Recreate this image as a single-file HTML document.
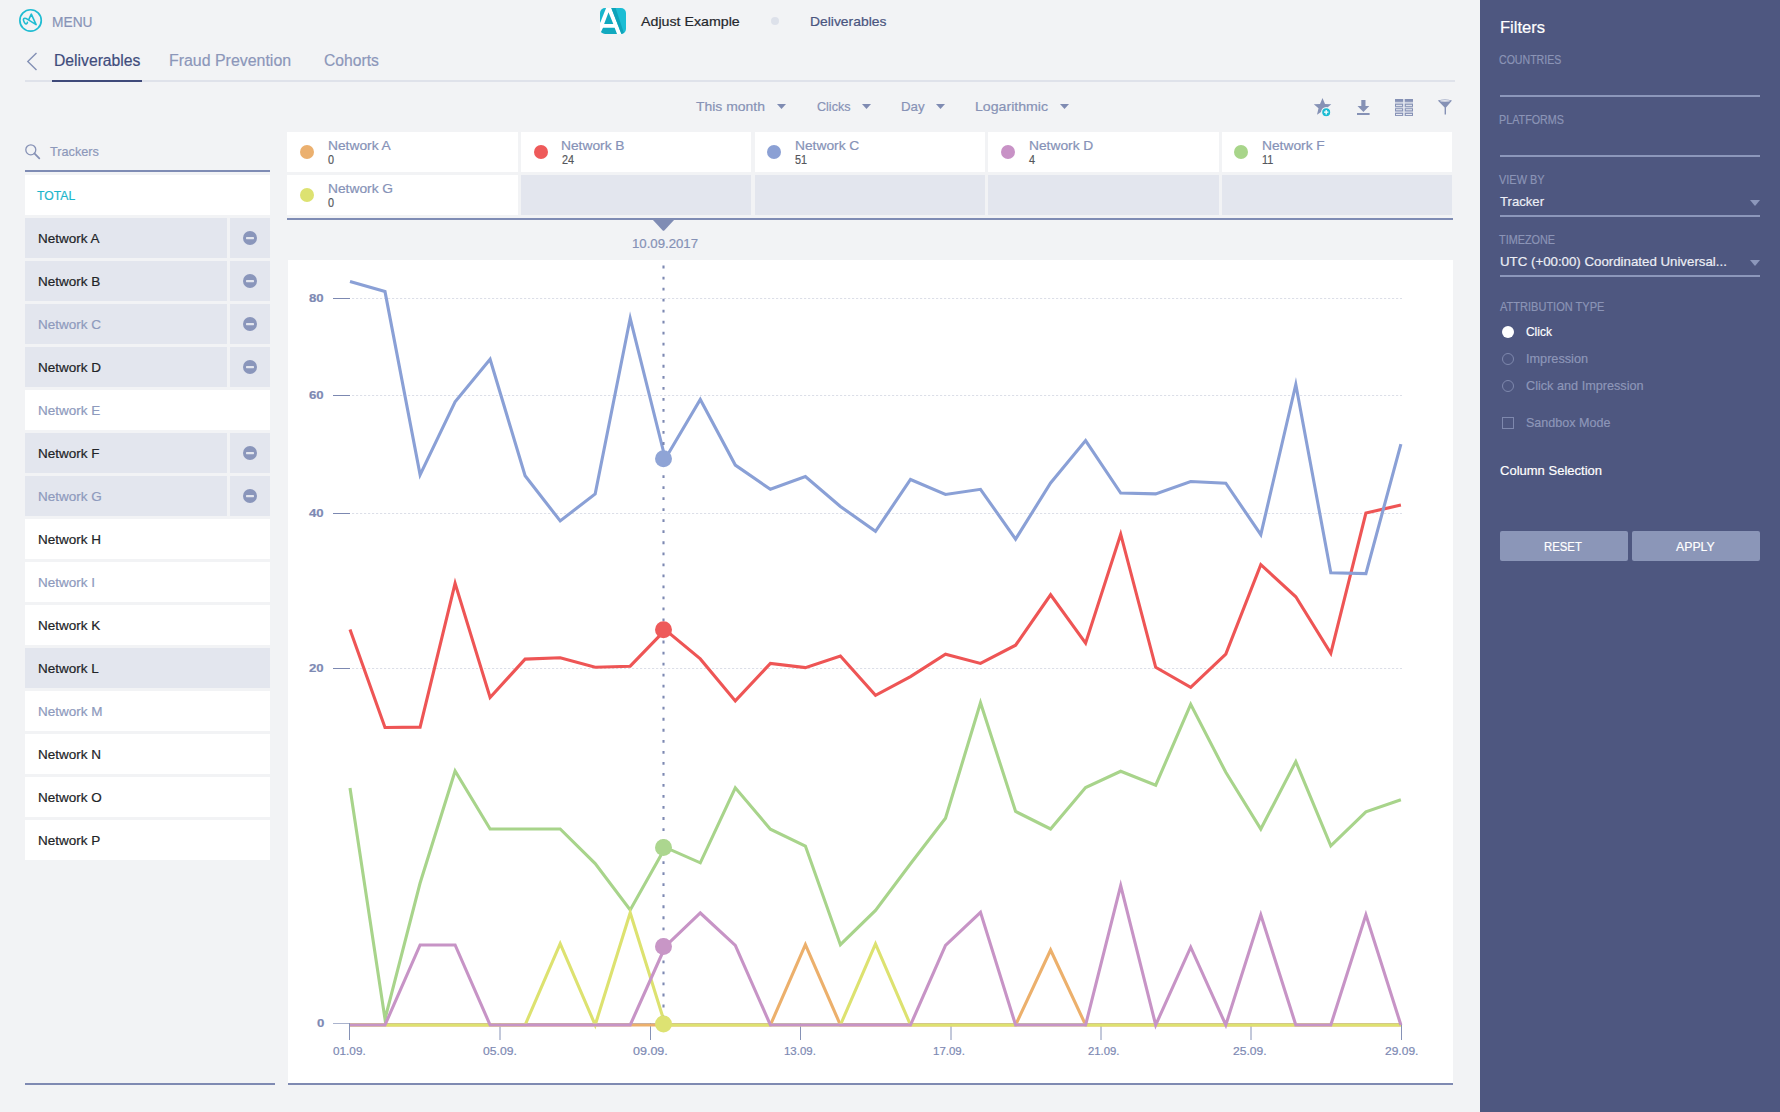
<!DOCTYPE html><html><head><meta charset="utf-8"><style>html,body{margin:0;padding:0;}body{width:1780px;height:1112px;overflow:hidden;position:relative;background:#f2f3f5;font-family:"Liberation Sans",sans-serif;}.abs{position:absolute;}.t{position:absolute;white-space:nowrap;-webkit-text-stroke:0.2px currentColor;}</style></head><body>
<svg class="abs" style="left:18px;top:8px" width="26" height="26" viewBox="0 0 26 26"><circle cx="12.57" cy="12.43" r="10.7" fill="none" stroke="#1fbcd2" stroke-width="1.7"/><path d="M18.1 16.6 L13.3 6.2 L10.6 11.8 M18.1 16.6 L9.6 11.4 C7.6 10.1 5.5 9.8 5.4 11.5 C5.5 13.2 7 15.8 8 16 C8.8 16.1 9.5 14.6 9.4 14.2" fill="none" stroke="#1fbcd2" stroke-width="1.6" stroke-linejoin="round" stroke-linecap="round"/></svg><div class="t" style="left:51.70px;top:14.83px;font-size:14.5px;line-height:14.5px;color:#8893b7;font-weight:400;transform:scaleX(0.9485);transform-origin:0.00px 0;">MENU</div>
<svg class="abs" style="left:26px;top:52px" width="12" height="19" viewBox="0 0 12 19"><path d="M10.5 1 L1.8 9.5 L10.5 18" fill="none" stroke="#8390b5" stroke-width="1.4"/></svg><div class="t" style="left:53.80px;top:52.56px;font-size:16px;line-height:16px;color:#404c7c;font-weight:400;transform:scaleX(0.9813);transform-origin:0.00px 0;">Deliverables</div>
<div class="t" style="left:169.40px;top:52.66px;font-size:16px;line-height:16px;color:#8c97ba;font-weight:400;transform:scaleX(0.9947);transform-origin:0.00px 0;">Fraud Prevention</div>
<div class="t" style="left:323.60px;top:52.66px;font-size:16px;line-height:16px;color:#8c97ba;font-weight:400;transform:scaleX(0.9786);transform-origin:0.00px 0;">Cohorts</div>
<div class="abs" style="left:25px;top:80px;width:1430px;height:2px;background:#dfe2ea"></div><div class="abs" style="left:52px;top:80px;width:90px;height:2px;background:#3f4a7a"></div><svg class="abs" style="left:600px;top:8px" width="26" height="26" viewBox="0 0 26 26"><defs><clipPath id="rc"><rect x="0" y="0" width="26" height="26" rx="5"/></clipPath></defs><g clip-path="url(#rc)"><rect width="26" height="26" fill="#ffffff"/><path d="M0 0 L6.1 0 L0.3 14.6 L0 14.6 Z" fill="#16b6cd"/><path d="M8.5 4.3 L13.3 15.9 L4.1 15.9 Z" fill="#12a9bf"/><path d="M3 19.85 L14.65 19.85 L17.2 26.5 L-1 26.5 L1.2 23.5 Z" fill="#12a9bf"/><path d="M11.3 0 L26 0 L26 26 L21.4 26 Z" fill="#1bbdd4"/><path d="M11.3 0 L15.6 0 L24.2 26 L21.4 26 Z" fill="#0fa3b9"/></g></svg><div class="t" style="left:641.20px;top:14.93px;font-size:13.2px;line-height:13.2px;color:#25272c;font-weight:400;transform:scaleX(1.0774);transform-origin:0.00px 0;">Adjust Example</div>
<div class="abs" style="left:771px;top:17px;width:8px;height:8px;border-radius:50%;background:#dde1ea"></div><div class="t" style="left:809.70px;top:14.70px;font-size:13px;line-height:13px;color:#4a557f;font-weight:400;transform:scaleX(1.0678);transform-origin:0.00px 0;">Deliverables</div>
<div class="t" style="left:696.20px;top:100.47px;font-size:13.5px;line-height:13.5px;color:#8792b6;font-weight:400;transform:scaleX(1.0322);transform-origin:0.00px 0;">This month</div>
<svg class="abs" style="left:777px;top:104px" width="9" height="5" viewBox="0 0 9 5"><path d="M0 0 L9 0 L4.5 5 Z" fill="#7f8bb2"/></svg><div class="t" style="left:816.60px;top:100.47px;font-size:13.5px;line-height:13.5px;color:#8792b6;font-weight:400;transform:scaleX(0.9306);transform-origin:0.00px 0;">Clicks</div>
<svg class="abs" style="left:862px;top:104px" width="9" height="5" viewBox="0 0 9 5"><path d="M0 0 L9 0 L4.5 5 Z" fill="#7f8bb2"/></svg><div class="t" style="left:901.10px;top:100.47px;font-size:13.5px;line-height:13.5px;color:#8792b6;font-weight:400;transform:scaleX(0.9833);transform-origin:0.00px 0;">Day</div>
<svg class="abs" style="left:936px;top:104px" width="9" height="5" viewBox="0 0 9 5"><path d="M0 0 L9 0 L4.5 5 Z" fill="#7f8bb2"/></svg><div class="t" style="left:975.00px;top:100.47px;font-size:13.5px;line-height:13.5px;color:#8792b6;font-weight:400;transform:scaleX(1.0473);transform-origin:0.00px 0;">Logarithmic</div>
<svg class="abs" style="left:1060px;top:104px" width="9" height="5" viewBox="0 0 9 5"><path d="M0 0 L9 0 L4.5 5 Z" fill="#7f8bb2"/></svg><svg class="abs" style="left:1310px;top:95px" width="150" height="24" viewBox="1310 95 150 24"><path d="M1322.5 98 L1325 104 L1331.3 104.3 L1326.5 108.2 L1328 114.5 L1322.5 111 L1317 114.8 L1318.5 108.2 L1313.8 104.3 L1320 104 Z" fill="#8591b5"/><circle cx="1326.2" cy="112.2" r="4.6" fill="#1bbcd3" stroke="#f2f3f6" stroke-width="1.2"/><path d="M1326.2 110 V114.4 M1324 112.2 H1328.4" stroke="#fff" stroke-width="1.3"/><path d="M1361.3 100 H1365.5 V106 H1369.3 L1363.4 112 L1357.5 106 H1361.3 Z" fill="#8591b5"/><rect x="1357" y="113" width="12.6" height="2" fill="#8591b5"/><rect x="1395" y="99" width="18" height="17" fill="#ccd1e0"/><rect x="1403.1" y="99" width="1.7" height="17" fill="#e4e7ef"/><rect x="1395" y="99" width="8.1" height="2.8" fill="#8591b5"/><rect x="1404.8" y="99" width="8.2" height="2.8" fill="#8591b5"/><rect x="1395.5" y="104.3" width="7.1" height="2" fill="#f4f5f8" stroke="#8591b5" stroke-width="1"/><rect x="1405.3" y="104.3" width="7.2" height="2" fill="#f4f5f8" stroke="#8591b5" stroke-width="1"/><rect x="1395.5" y="108.8" width="7.1" height="2" fill="#f4f5f8" stroke="#8591b5" stroke-width="1"/><rect x="1405.3" y="108.8" width="7.2" height="2" fill="#f4f5f8" stroke="#8591b5" stroke-width="1"/><rect x="1395.5" y="113.4" width="7.1" height="2" fill="#f4f5f8" stroke="#8591b5" stroke-width="1"/><rect x="1405.3" y="113.4" width="7.2" height="2" fill="#f4f5f8" stroke="#8591b5" stroke-width="1"/><path d="M1437.8 100.5 Q1445 98.5 1452 100.5 L1446 107.5 L1446 114.5 L1444.6 114.5 L1444.6 107.5 Z" fill="#8591b5"/><ellipse cx="1445" cy="100.8" rx="5" ry="0.9" fill="#e6e8ef"/></svg><svg class="abs" style="left:24px;top:143px" width="18" height="18" viewBox="0 0 18 18"><circle cx="6.8" cy="6.8" r="5" fill="none" stroke="#8792b6" stroke-width="1.3"/><path d="M10.4 10.4 L15.3 15.3" stroke="#8792b6" stroke-width="1.8" stroke-linecap="round"/></svg><div class="t" style="left:50.20px;top:144.77px;font-size:13.5px;line-height:13.5px;color:#8d98ba;font-weight:400;transform:scaleX(0.9404);transform-origin:0.00px 0;">Trackers</div>
<div class="abs" style="left:25px;top:170px;width:245px;height:2px;background:#7f8cb4"></div><div class="abs" style="left:25px;top:175px;width:245px;height:40px;background:#fff"></div><div class="t" style="left:37.10px;top:188.74px;font-size:13.3px;line-height:13.3px;color:#1cb6cb;font-weight:400;transform:scaleX(0.9172);transform-origin:0.00px 0;">TOTAL</div>
<div class="abs" style="left:25px;top:218px;width:202px;height:40px;background:#e3e6ee"></div><div class="abs" style="left:230px;top:218px;width:40px;height:40px;background:#e3e6ee"></div><svg class="abs" style="left:243px;top:231px" width="14" height="14" viewBox="0 0 14 14"><circle cx="7" cy="7" r="7" fill="#8a96bb"/><rect x="3" y="5.9" width="8" height="2.3" rx="0.6" fill="#e3e6ee"/></svg><div class="t" style="left:37.60px;top:232.10px;font-size:13px;line-height:13px;color:#222428;font-weight:400;transform:scaleX(1.0380);transform-origin:0.00px 0;">Network A</div>
<div class="abs" style="left:25px;top:261px;width:202px;height:40px;background:#e3e6ee"></div><div class="abs" style="left:230px;top:261px;width:40px;height:40px;background:#e3e6ee"></div><svg class="abs" style="left:243px;top:274px" width="14" height="14" viewBox="0 0 14 14"><circle cx="7" cy="7" r="7" fill="#8a96bb"/><rect x="3" y="5.9" width="8" height="2.3" rx="0.6" fill="#e3e6ee"/></svg><div class="t" style="left:37.60px;top:275.10px;font-size:13px;line-height:13px;color:#222428;font-weight:400;transform:scaleX(1.0380);transform-origin:0.00px 0;">Network B</div>
<div class="abs" style="left:25px;top:304px;width:202px;height:40px;background:#e3e6ee"></div><div class="abs" style="left:230px;top:304px;width:40px;height:40px;background:#e3e6ee"></div><svg class="abs" style="left:243px;top:317px" width="14" height="14" viewBox="0 0 14 14"><circle cx="7" cy="7" r="7" fill="#8a96bb"/><rect x="3" y="5.9" width="8" height="2.3" rx="0.6" fill="#e3e6ee"/></svg><div class="t" style="left:37.60px;top:318.10px;font-size:13px;line-height:13px;color:#8e9abd;font-weight:400;transform:scaleX(1.0380);transform-origin:0.00px 0;">Network C</div>
<div class="abs" style="left:25px;top:347px;width:202px;height:40px;background:#e3e6ee"></div><div class="abs" style="left:230px;top:347px;width:40px;height:40px;background:#e3e6ee"></div><svg class="abs" style="left:243px;top:360px" width="14" height="14" viewBox="0 0 14 14"><circle cx="7" cy="7" r="7" fill="#8a96bb"/><rect x="3" y="5.9" width="8" height="2.3" rx="0.6" fill="#e3e6ee"/></svg><div class="t" style="left:37.60px;top:361.10px;font-size:13px;line-height:13px;color:#222428;font-weight:400;transform:scaleX(1.0380);transform-origin:0.00px 0;">Network D</div>
<div class="abs" style="left:25px;top:390px;width:245px;height:40px;background:#fff"></div><div class="t" style="left:37.60px;top:404.10px;font-size:13px;line-height:13px;color:#8e9abd;font-weight:400;transform:scaleX(1.0380);transform-origin:0.00px 0;">Network E</div>
<div class="abs" style="left:25px;top:433px;width:202px;height:40px;background:#e3e6ee"></div><div class="abs" style="left:230px;top:433px;width:40px;height:40px;background:#e3e6ee"></div><svg class="abs" style="left:243px;top:446px" width="14" height="14" viewBox="0 0 14 14"><circle cx="7" cy="7" r="7" fill="#8a96bb"/><rect x="3" y="5.9" width="8" height="2.3" rx="0.6" fill="#e3e6ee"/></svg><div class="t" style="left:37.60px;top:447.10px;font-size:13px;line-height:13px;color:#222428;font-weight:400;transform:scaleX(1.0380);transform-origin:0.00px 0;">Network F</div>
<div class="abs" style="left:25px;top:476px;width:202px;height:40px;background:#e3e6ee"></div><div class="abs" style="left:230px;top:476px;width:40px;height:40px;background:#e3e6ee"></div><svg class="abs" style="left:243px;top:489px" width="14" height="14" viewBox="0 0 14 14"><circle cx="7" cy="7" r="7" fill="#8a96bb"/><rect x="3" y="5.9" width="8" height="2.3" rx="0.6" fill="#e3e6ee"/></svg><div class="t" style="left:37.60px;top:490.10px;font-size:13px;line-height:13px;color:#8e9abd;font-weight:400;transform:scaleX(1.0380);transform-origin:0.00px 0;">Network G</div>
<div class="abs" style="left:25px;top:519px;width:245px;height:40px;background:#fff"></div><div class="t" style="left:37.60px;top:533.10px;font-size:13px;line-height:13px;color:#222428;font-weight:400;transform:scaleX(1.0380);transform-origin:0.00px 0;">Network H</div>
<div class="abs" style="left:25px;top:562px;width:245px;height:40px;background:#fff"></div><div class="t" style="left:37.60px;top:576.10px;font-size:13px;line-height:13px;color:#8e9abd;font-weight:400;transform:scaleX(1.0380);transform-origin:0.00px 0;">Network I</div>
<div class="abs" style="left:25px;top:605px;width:245px;height:40px;background:#fff"></div><div class="t" style="left:37.60px;top:619.10px;font-size:13px;line-height:13px;color:#222428;font-weight:400;transform:scaleX(1.0380);transform-origin:0.00px 0;">Network K</div>
<div class="abs" style="left:25px;top:648px;width:245px;height:40px;background:#e3e6ee"></div><div class="t" style="left:37.60px;top:662.10px;font-size:13px;line-height:13px;color:#222428;font-weight:400;transform:scaleX(1.0380);transform-origin:0.00px 0;">Network L</div>
<div class="abs" style="left:25px;top:691px;width:245px;height:40px;background:#fff"></div><div class="t" style="left:37.60px;top:705.10px;font-size:13px;line-height:13px;color:#8e9abd;font-weight:400;transform:scaleX(1.0380);transform-origin:0.00px 0;">Network M</div>
<div class="abs" style="left:25px;top:734px;width:245px;height:40px;background:#fff"></div><div class="t" style="left:37.60px;top:748.10px;font-size:13px;line-height:13px;color:#222428;font-weight:400;transform:scaleX(1.0380);transform-origin:0.00px 0;">Network N</div>
<div class="abs" style="left:25px;top:777px;width:245px;height:40px;background:#fff"></div><div class="t" style="left:37.60px;top:791.10px;font-size:13px;line-height:13px;color:#222428;font-weight:400;transform:scaleX(1.0380);transform-origin:0.00px 0;">Network O</div>
<div class="abs" style="left:25px;top:820px;width:245px;height:40px;background:#fff"></div><div class="t" style="left:37.60px;top:834.10px;font-size:13px;line-height:13px;color:#222428;font-weight:400;transform:scaleX(1.0380);transform-origin:0.00px 0;">Network P</div>
<div class="abs" style="left:25px;top:1083px;width:250px;height:2px;background:#7f8ab2"></div><div class="abs" style="left:287.3px;top:132px;width:230.6px;height:40px;background:#fff"></div><div class="abs" style="left:300.0px;top:145px;width:14px;height:14px;border-radius:50%;background:#ebb06f"></div><div class="t" style="left:327.80px;top:138.90px;font-size:13px;line-height:13px;color:#8692b7;font-weight:400;transform:scaleX(1.0599);transform-origin:0.00px 0;">Network A</div>
<div class="t" style="left:328.00px;top:153.89px;font-size:12.3px;line-height:12.3px;color:#55575c;font-weight:400;transform:scaleX(0.8800);transform-origin:0.00px 0;">0</div>
<div class="abs" style="left:520.9px;top:132px;width:230.6px;height:40px;background:#fff"></div><div class="abs" style="left:533.6px;top:145px;width:14px;height:14px;border-radius:50%;background:#ee5a5a"></div><div class="t" style="left:561.40px;top:138.90px;font-size:13px;line-height:13px;color:#8692b7;font-weight:400;transform:scaleX(1.0599);transform-origin:0.00px 0;">Network B</div>
<div class="t" style="left:561.60px;top:153.89px;font-size:12.3px;line-height:12.3px;color:#55575c;font-weight:400;transform:scaleX(0.8800);transform-origin:0.00px 0;">24</div>
<div class="abs" style="left:754.5px;top:132px;width:230.6px;height:40px;background:#fff"></div><div class="abs" style="left:767.2px;top:145px;width:14px;height:14px;border-radius:50%;background:#8ba0d4"></div><div class="t" style="left:795.00px;top:138.90px;font-size:13px;line-height:13px;color:#8692b7;font-weight:400;transform:scaleX(1.0599);transform-origin:0.00px 0;">Network C</div>
<div class="t" style="left:795.20px;top:153.89px;font-size:12.3px;line-height:12.3px;color:#55575c;font-weight:400;transform:scaleX(0.8800);transform-origin:0.00px 0;">51</div>
<div class="abs" style="left:988.1px;top:132px;width:230.6px;height:40px;background:#fff"></div><div class="abs" style="left:1000.8000000000001px;top:145px;width:14px;height:14px;border-radius:50%;background:#c892c6"></div><div class="t" style="left:1028.60px;top:138.90px;font-size:13px;line-height:13px;color:#8692b7;font-weight:400;transform:scaleX(1.0599);transform-origin:0.00px 0;">Network D</div>
<div class="t" style="left:1028.80px;top:153.89px;font-size:12.3px;line-height:12.3px;color:#55575c;font-weight:400;transform:scaleX(0.8800);transform-origin:0.00px 0;">4</div>
<div class="abs" style="left:1221.7px;top:132px;width:230.6px;height:40px;background:#fff"></div><div class="abs" style="left:1234.4px;top:145px;width:14px;height:14px;border-radius:50%;background:#a8d58a"></div><div class="t" style="left:1262.20px;top:138.90px;font-size:13px;line-height:13px;color:#8692b7;font-weight:400;transform:scaleX(1.0599);transform-origin:0.00px 0;">Network F</div>
<div class="t" style="left:1262.40px;top:153.89px;font-size:12.3px;line-height:12.3px;color:#55575c;font-weight:400;transform:scaleX(0.8800);transform-origin:0.00px 0;">11</div>
<div class="abs" style="left:287.3px;top:175px;width:230.6px;height:40px;background:#fff"></div><div class="abs" style="left:300.0px;top:188px;width:14px;height:14px;border-radius:50%;background:#dde271"></div><div class="t" style="left:327.80px;top:181.90px;font-size:13px;line-height:13px;color:#8692b7;font-weight:400;transform:scaleX(1.0599);transform-origin:0.00px 0;">Network G</div>
<div class="t" style="left:328.00px;top:196.89px;font-size:12.3px;line-height:12.3px;color:#55575c;font-weight:400;transform:scaleX(0.8800);transform-origin:0.00px 0;">0</div>
<div class="abs" style="left:520.9px;top:175px;width:230.6px;height:40px;background:#e3e6ee"></div><div class="abs" style="left:754.5px;top:175px;width:230.6px;height:40px;background:#e3e6ee"></div><div class="abs" style="left:988.1px;top:175px;width:230.6px;height:40px;background:#e3e6ee"></div><div class="abs" style="left:1221.7px;top:175px;width:230.6px;height:40px;background:#e3e6ee"></div><div class="abs" style="left:287px;top:218px;width:1166px;height:2px;background:#7f8cb4"></div><svg class="abs" style="left:652px;top:219px" width="23" height="13" viewBox="0 0 23 13"><path d="M0 0 L23 0 L12.5 11.2 Q11.5 12.2 10.5 11.2 Z" fill="#7f8cb4"/></svg><div class="t" style="left:632.00px;top:237.07px;font-size:13.5px;line-height:13.5px;color:#8591b6;font-weight:400;transform:scaleX(0.9771);transform-origin:0.00px 0;">10.09.2017</div>
<div class="abs" style="left:288px;top:260px;width:1165px;height:823px;background:#fff"></div><div class="abs" style="left:288px;top:1083px;width:1165px;height:2px;background:#7f8ab2"></div><svg class="abs" style="left:0;top:0" width="1480" height="1112" viewBox="0 0 1480 1112"><line x1="352" y1="298.5" x2="1402" y2="298.5" stroke="#dcdfe8" stroke-width="1" stroke-dasharray="2.2 1.8"/><line x1="333" y1="298.5" x2="350" y2="298.5" stroke="#7c88b1" stroke-width="1"/><line x1="352" y1="395.5" x2="1402" y2="395.5" stroke="#dcdfe8" stroke-width="1" stroke-dasharray="2.2 1.8"/><line x1="333" y1="395.5" x2="350" y2="395.5" stroke="#7c88b1" stroke-width="1"/><line x1="352" y1="513.5" x2="1402" y2="513.5" stroke="#dcdfe8" stroke-width="1" stroke-dasharray="2.2 1.8"/><line x1="333" y1="513.5" x2="350" y2="513.5" stroke="#7c88b1" stroke-width="1"/><line x1="352" y1="668.5" x2="1402" y2="668.5" stroke="#dcdfe8" stroke-width="1" stroke-dasharray="2.2 1.8"/><line x1="333" y1="668.5" x2="350" y2="668.5" stroke="#7c88b1" stroke-width="1"/><line x1="333" y1="1023.5" x2="1402" y2="1023.5" stroke="#aab3cd" stroke-width="1"/><line x1="349.5" y1="1023" x2="349.5" y2="1040" stroke="#8692b6" stroke-width="1"/><line x1="500" y1="1023" x2="500" y2="1040" stroke="#8692b6" stroke-width="1"/><line x1="650.5" y1="1023" x2="650.5" y2="1040" stroke="#8692b6" stroke-width="1"/><line x1="800.5" y1="1023" x2="800.5" y2="1040" stroke="#8692b6" stroke-width="1"/><line x1="951" y1="1023" x2="951" y2="1040" stroke="#8692b6" stroke-width="1"/><line x1="1101" y1="1023" x2="1101" y2="1040" stroke="#8692b6" stroke-width="1"/><line x1="1251" y1="1023" x2="1251" y2="1040" stroke="#8692b6" stroke-width="1"/><line x1="1401.5" y1="1023" x2="1401.5" y2="1040" stroke="#8692b6" stroke-width="1"/><polyline points="350.0,788.0 385.0,1019.0 420.1,883.0 455.1,771.0 490.1,829.0 525.1,829.0 560.2,829.0 595.2,863.6 630.2,910.0 665.3,847.4 700.3,862.8 735.3,787.8 770.4,829.2 805.4,846.0 840.4,944.7 875.5,910.4 910.5,863.8 945.5,818.2 980.5,702.7 1015.6,811.5 1050.6,829.0 1085.6,787.5 1120.7,771.3 1155.7,785.2 1190.7,704.3 1225.8,772.3 1260.8,829.0 1295.8,761.6 1330.8,845.8 1365.9,811.8 1400.9,799.8" fill="none" stroke="#a8d48b" stroke-width="3.1" stroke-linejoin="miter" stroke-miterlimit="10"/><polyline points="350.0,1025.0 385.0,1025.0 420.1,1025.0 455.1,1025.0 490.1,1025.0 525.1,1025.0 560.2,1025.0 595.2,1025.0 630.2,1025.0 665.3,1025.0 700.3,1025.0 735.3,1025.0 770.4,1025.0 805.4,944.7 840.4,1025.0 875.5,1025.0 910.5,1025.0 945.5,1025.0 980.5,1025.0 1015.6,1025.0 1050.6,950.0 1085.6,1025.0 1120.7,1025.0 1155.7,1025.0 1190.7,1025.0 1225.8,1025.0 1260.8,1025.0 1295.8,1025.0 1330.8,1025.0 1365.9,1025.0 1400.9,1025.0" fill="none" stroke="#ecb06c" stroke-width="3.1" stroke-linejoin="miter" stroke-miterlimit="10"/><polyline points="350.0,1025.0 385.0,1025.0 420.1,1025.0 455.1,1025.0 490.1,1025.0 525.1,1025.0 560.2,943.7 595.2,1025.0 630.2,912.7 665.3,1025.0 700.3,1025.0 735.3,1025.0 770.4,1025.0 805.4,1025.0 840.4,1025.0 875.5,943.8 910.5,1025.0 945.5,1025.0 980.5,1025.0 1015.6,1025.0 1050.6,1025.0 1085.6,1025.0 1120.7,1025.0 1155.7,1025.0 1190.7,1025.0 1225.8,1025.0 1260.8,1025.0 1295.8,1025.0 1330.8,1025.0 1365.9,1025.0 1400.9,1025.0" fill="none" stroke="#dde270" stroke-width="3.1" stroke-linejoin="miter" stroke-miterlimit="10"/><polyline points="350.0,1025.0 385.0,1025.0 420.1,945.0 455.1,945.0 490.1,1025.0 525.1,1025.0 560.2,1025.0 595.2,1025.0 630.2,1025.0 665.3,946.5 700.3,913.0 735.3,945.4 770.4,1025.0 805.4,1025.0 840.4,1025.0 875.5,1025.0 910.5,1025.0 945.5,945.4 980.5,912.4 1015.6,1025.0 1050.6,1025.0 1085.6,1025.0 1120.7,885.6 1155.7,1025.0 1190.7,947.2 1225.8,1025.0 1260.8,914.8 1295.8,1025.0 1330.8,1025.0 1365.9,914.8 1400.9,1025.0" fill="none" stroke="#c794c6" stroke-width="3.1" stroke-linejoin="miter" stroke-miterlimit="10"/><polyline points="350.0,629.4 385.0,727.5 420.1,727.1 455.1,583.3 490.1,697.5 525.1,659.1 560.2,657.7 595.2,667.2 630.2,666.2 665.3,629.8 700.3,658.9 735.3,700.9 770.4,663.4 805.4,667.6 840.4,656.0 875.5,695.3 910.5,676.6 945.5,654.2 980.5,663.4 1015.6,645.2 1050.6,594.8 1085.6,643.2 1120.7,534.2 1155.7,667.3 1190.7,687.4 1225.8,654.0 1260.8,564.6 1295.8,596.8 1330.8,653.3 1365.9,513.0 1400.9,505.1" fill="none" stroke="#ee5555" stroke-width="3.1" stroke-linejoin="miter" stroke-miterlimit="10"/><polyline points="350.0,281.5 385.0,291.6 420.1,474.9 455.1,401.8 490.1,359.2 525.1,475.8 560.2,520.9 595.2,493.9 630.2,318.3 665.3,458.8 700.3,399.5 735.3,465.1 770.4,489.3 805.4,476.6 840.4,506.5 875.5,531.3 910.5,479.5 945.5,494.5 980.5,489.3 1015.6,539.1 1050.6,483.0 1085.6,440.6 1120.7,493.0 1155.7,493.9 1190.7,481.5 1225.8,483.2 1260.8,534.7 1295.8,384.5 1330.8,572.7 1365.9,573.6 1400.9,444.1" fill="none" stroke="#8aa0d6" stroke-width="3.1" stroke-linejoin="miter" stroke-miterlimit="10"/><line x1="663.5" y1="265.6" x2="663.5" y2="1022" stroke="#7d89b2" stroke-width="2.1" stroke-dasharray="2.8 8.23"/><circle cx="663.5" cy="458.8" r="8.5" fill="#8fa4d6"/><circle cx="663.5" cy="629.8" r="8.5" fill="#ee5a5a"/><circle cx="663.5" cy="847.4" r="8.5" fill="#acd68f"/><circle cx="663.5" cy="946.5" r="8.5" fill="#c896c6"/><circle cx="663.5" cy="1024" r="8.5" fill="#dde272"/></svg><div class="t" style="left:308.90px;top:293.07px;font-size:11.5px;line-height:11.5px;color:#7d89b3;font-weight:700;transform:scaleX(1.1484);transform-origin:0.00px 0;">80</div>
<div class="t" style="left:308.90px;top:390.07px;font-size:11.5px;line-height:11.5px;color:#7d89b3;font-weight:700;transform:scaleX(1.1484);transform-origin:0.00px 0;">60</div>
<div class="t" style="left:308.90px;top:508.07px;font-size:11.5px;line-height:11.5px;color:#7d89b3;font-weight:700;transform:scaleX(1.1484);transform-origin:0.00px 0;">40</div>
<div class="t" style="left:308.90px;top:663.07px;font-size:11.5px;line-height:11.5px;color:#7d89b3;font-weight:700;transform:scaleX(1.1484);transform-origin:0.00px 0;">20</div>
<div class="t" style="left:316.50px;top:1017.87px;font-size:11.5px;line-height:11.5px;color:#7d89b3;font-weight:700;transform:scaleX(1.1500);transform-origin:0.00px 0;">0</div>
<div class="t" style="left:333.00px;top:1046.23px;font-size:11.3px;line-height:11.3px;color:#7d89b3;font-weight:400;transform:scaleX(1.0414);transform-origin:0.00px 0;">01.09.</div>
<div class="t" style="left:482.80px;top:1046.23px;font-size:11.3px;line-height:11.3px;color:#7d89b3;font-weight:400;transform:scaleX(1.0764);transform-origin:0.00px 0;">05.09.</div>
<div class="t" style="left:632.80px;top:1046.23px;font-size:11.3px;line-height:11.3px;color:#7d89b3;font-weight:400;transform:scaleX(1.1083);transform-origin:0.00px 0;">09.09.</div>
<div class="t" style="left:784.40px;top:1046.23px;font-size:11.3px;line-height:11.3px;color:#7d89b3;font-weight:400;transform:scaleX(1.0127);transform-origin:0.00px 0;">13.09.</div>
<div class="t" style="left:933.40px;top:1046.23px;font-size:11.3px;line-height:11.3px;color:#7d89b3;font-weight:400;transform:scaleX(1.0159);transform-origin:0.00px 0;">17.09.</div>
<div class="t" style="left:1088.40px;top:1046.23px;font-size:11.3px;line-height:11.3px;color:#7d89b3;font-weight:400;transform:scaleX(1.0032);transform-origin:0.00px 0;">21.09.</div>
<div class="t" style="left:1233.00px;top:1046.23px;font-size:11.3px;line-height:11.3px;color:#7d89b3;font-weight:400;transform:scaleX(1.0701);transform-origin:0.00px 0;">25.09.</div>
<div class="t" style="left:1385.30px;top:1046.23px;font-size:11.3px;line-height:11.3px;color:#7d89b3;font-weight:400;transform:scaleX(1.0637);transform-origin:0.00px 0;">29.09.</div>
<div class="abs" style="left:1480px;top:0;width:300px;height:1112px;background:#4e5780"></div><div class="t" style="left:1500.20px;top:20.16px;font-size:16px;line-height:16px;color:#ffffff;font-weight:400;transform:scaleX(1.0356);transform-origin:0.00px 0;">Filters</div>
<div class="t" style="left:1499.40px;top:54.04px;font-size:12px;line-height:12px;color:#8b94b6;font-weight:400;transform:scaleX(0.8818);transform-origin:0.00px 0;">COUNTRIES</div>
<div class="abs" style="left:1500px;top:95px;width:260px;height:2px;background:#8c97bb"></div><div class="t" style="left:1499.40px;top:114.24px;font-size:12px;line-height:12px;color:#8b94b6;font-weight:400;transform:scaleX(0.8972);transform-origin:0.00px 0;">PLATFORMS</div>
<div class="abs" style="left:1500px;top:155px;width:260px;height:2px;background:#8c97bb"></div><div class="t" style="left:1499.40px;top:174.04px;font-size:12px;line-height:12px;color:#8b94b6;font-weight:400;transform:scaleX(0.9120);transform-origin:0.00px 0;">VIEW BY</div>
<div class="t" style="left:1500.00px;top:194.97px;font-size:13.5px;line-height:13.5px;color:#eceef5;font-weight:400;transform:scaleX(0.9724);transform-origin:0.00px 0;">Tracker</div>
<svg class="abs" style="left:1750px;top:200px" width="10" height="6" viewBox="0 0 10 6"><path d="M0 0 L10 0 L5.0 6 Z" fill="#8c97bb"/></svg><div class="abs" style="left:1500px;top:215px;width:260px;height:2px;background:#8c97bb"></div><div class="t" style="left:1499.40px;top:233.94px;font-size:12px;line-height:12px;color:#8b94b6;font-weight:400;transform:scaleX(0.9048);transform-origin:0.00px 0;">TIMEZONE</div>
<div class="t" style="left:1500.00px;top:255.07px;font-size:13.5px;line-height:13.5px;color:#eceef5;font-weight:400;transform:scaleX(0.9831);transform-origin:0.00px 0;">UTC (+00:00) Coordinated Universal...</div>
<svg class="abs" style="left:1750px;top:260px" width="10" height="6" viewBox="0 0 10 6"><path d="M0 0 L10 0 L5.0 6 Z" fill="#8c97bb"/></svg><div class="abs" style="left:1500px;top:275px;width:260px;height:2px;background:#8c97bb"></div><div class="t" style="left:1500.20px;top:301.44px;font-size:12px;line-height:12px;color:#8b94b6;font-weight:400;transform:scaleX(0.9194);transform-origin:0.00px 0;">ATTRIBUTION TYPE</div>
<div class="abs" style="left:1501.5px;top:325.8px;width:12px;height:12px;border-radius:50%;background:#fff"></div><div class="t" style="left:1526.40px;top:324.97px;font-size:13.5px;line-height:13.5px;color:#ffffff;font-weight:400;transform:scaleX(0.8840);transform-origin:0.00px 0;">Click</div>
<div class="abs" style="left:1501.5px;top:352.8px;width:10px;height:10px;border-radius:50%;border:1px solid #7e88ad"></div><div class="t" style="left:1526.40px;top:351.97px;font-size:13.5px;line-height:13.5px;color:#8d96b8;font-weight:400;transform:scaleX(0.9394);transform-origin:0.00px 0;">Impression</div>
<div class="abs" style="left:1501.5px;top:379.8px;width:10px;height:10px;border-radius:50%;border:1px solid #7e88ad"></div><div class="t" style="left:1526.40px;top:378.97px;font-size:13.5px;line-height:13.5px;color:#8d96b8;font-weight:400;transform:scaleX(0.9385);transform-origin:0.00px 0;">Click and Impression</div>
<div class="abs" style="left:1502px;top:417px;width:10px;height:10px;border:1px solid #7e88ad"></div><div class="t" style="left:1526.40px;top:415.77px;font-size:13.5px;line-height:13.5px;color:#8d96b8;font-weight:400;transform:scaleX(0.9295);transform-origin:0.00px 0;">Sandbox Mode</div>
<div class="t" style="left:1500.20px;top:464.17px;font-size:13.5px;line-height:13.5px;color:#ffffff;font-weight:400;transform:scaleX(0.9641);transform-origin:0.00px 0;">Column Selection</div>
<div class="abs" style="left:1500px;top:531px;width:128px;height:30px;border-radius:2px;background:#8b96b8"></div><div class="abs" style="left:1632px;top:531px;width:128px;height:30px;border-radius:2px;background:#8b96b8"></div><div class="t" style="left:1544.20px;top:539.67px;font-size:13.5px;line-height:13.5px;color:#ffffff;font-weight:400;transform:scaleX(0.8400);transform-origin:0.00px 0;">RESET</div>
<div class="t" style="left:1676.00px;top:539.67px;font-size:13.5px;line-height:13.5px;color:#ffffff;font-weight:400;transform:scaleX(0.9095);transform-origin:0.00px 0;">APPLY</div>
</body></html>
